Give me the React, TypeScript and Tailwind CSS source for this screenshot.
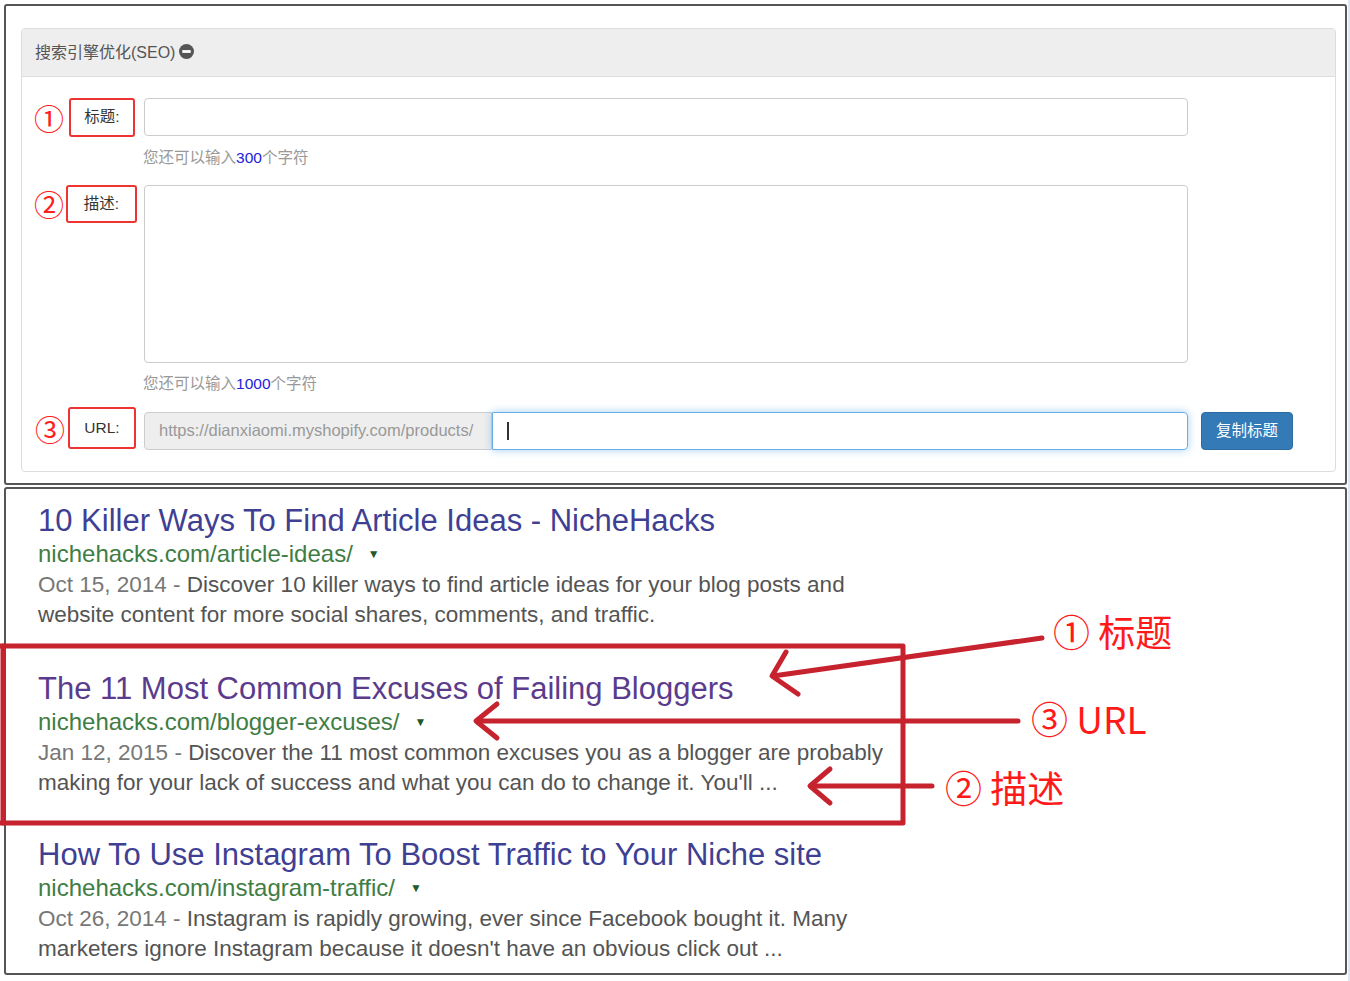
import React from "react";

const cjk = { fontFamily: '"Liberation Sans", "Noto Sans CJK SC", sans-serif' };
const serp = { fontFamily: '"Liberation Sans", Arial, sans-serif' };

const results = [
  {
    title: "10 Killer Ways To Find Article Ideas - NicheHacks",
    titleColor: "text-[#3f3f93]",
    url: "nichehacks.com/article-ideas/",
    date: "Oct 15, 2014",
    lines: [
      "Discover 10 killer ways to find article ideas for your blog posts and",
      "website content for more social shares, comments, and traffic.",
    ],
  },
  {
    title: "The 11 Most Common Excuses of Failing Bloggers",
    titleColor: "text-[#5b3c8c]",
    url: "nichehacks.com/blogger-excuses/",
    date: "Jan 12, 2015",
    lines: [
      "Discover the 11 most common excuses you as a blogger are probably",
      "making for your lack of success and what you can do to change it. You'll ...",
    ],
  },
  {
    title: "How To Use Instagram To Boost Traffic to Your Niche site",
    titleColor: "text-[#3f3f93]",
    url: "nichehacks.com/instagram-traffic/",
    date: "Oct 26, 2014",
    lines: [
      "Instagram is rapidly growing, ever since Facebook bought it. Many",
      "marketers ignore Instagram because it doesn't have an obvious click out ...",
    ],
  },
];

function Num({ n }: { n: string }) {
  return (
    <span className="text-[30px] leading-none text-[#ff2020]" style={cjk}>
      {n}
    </span>
  );
}

function LabelBox({ text, w, h }: { text: string; w: string; h: string }) {
  return (
    <div
      className={`${w} ${h} flex items-center justify-center border-2 border-[#ee3333] rounded-[3px] text-[15.5px] text-[#333]`}
    >
      {text}
    </div>
  );
}

function MinusCircle() {
  return (
    <svg width="15" height="15" viewBox="0 0 16 16" className="inline-block ml-[4px] -mt-[3px]">
      <circle cx="8" cy="8" r="8" fill="#555" />
      <rect x="3.5" y="6.5" width="9" height="3" fill="#fff" />
    </svg>
  );
}

function SeoForm() {
  return (
    <div className="ml-[4px] mt-[4px] w-[1343px] h-[481px] border-2 border-[#555] rounded-[3px] pt-[22px] pl-[15px]" style={cjk}>
      <div className="w-[1315px] h-[444px] border border-[#ddd] rounded-[4px] overflow-hidden bg-white">
        <div className="h-[48px] bg-[#eeeeee] border-b border-[#ddd] flex items-center pl-[13px] text-[16px] text-[#555]">
          搜索引擎优化(SEO)
          <MinusCircle />
        </div>
        <div className="pt-[21px]">
          <div className="flex items-center h-[38px]">
            <div className="w-[47px] pl-[12px] pt-[8px]">
              <Num n="①" />
            </div>
            <LabelBox text="标题:" w="w-[66px]" h="h-[39px]" />
            <div className="ml-[9px] w-[1044px] h-[38px] border border-[#ccc] rounded-[4px]" />
          </div>
          <div className="ml-[121px] mt-[12px] h-[20px] text-[15.5px] leading-[20px] text-[#999]">
            您还可以输入<span className="text-[#2222dd]">300</span>个字符
          </div>
          <div className="flex items-start mt-[17px]">
            <div className="w-[44px] pl-[12px] pt-[6px]">
              <Num n="②" />
            </div>
            <LabelBox text="描述:" w="w-[71px]" h="h-[38px]" />
            <div className="ml-[7px] w-[1044px] h-[178px] border border-[#ccc] rounded-[4px]" />
          </div>
          <div className="ml-[121px] mt-[11px] h-[20px] text-[15.5px] leading-[20px] text-[#999]">
            您还可以输入<span className="text-[#2222dd]">1000</span>个字符
          </div>
          <div className="flex items-center mt-[13px] h-[42px]">
            <div className="w-[46px] pl-[13px] pt-[8px]">
              <Num n="③" />
            </div>
            <LabelBox text="URL:" w="w-[68px]" h="h-[42px]" />
            <div className="ml-[8px] flex h-[38px] mt-[5px]">
              <div className="w-[348px] h-[38px] bg-[#eeeeee] border border-[#ccc] rounded-l-[4px] flex items-center pl-[14px] text-[16.5px] text-[#999]">
                https://dianxiaomi.myshopify.com/products/
              </div>
              <div className="w-[696px] h-[38px] border border-[#66afe9] rounded-r-[4px] shadow-[0_0_8px_rgba(102,175,233,0.6)] flex items-center pl-[14px]">
                <span className="w-[2px] h-[18px] bg-[#333]" />
              </div>
            </div>
            <div className="ml-[13px] mt-[5px] w-[92px] h-[38px] rounded-[4px] bg-[#337ab7] border border-[#2e6da4] flex items-center justify-center text-[15.5px] text-white">
              复制标题
            </div>
          </div>
        </div>
      </div>
    </div>
  );
}

function SerpShot() {
  return (
    <div className="ml-[4px] mt-[2px] w-[1343px] h-[488px] border-2 border-[#555] rounded-[3px] pt-[15px] pl-[32px] bg-white" style={serp}>
      {results.map((r, i) => (
        <div key={r.url} className={i === 1 ? "mt-[42px]" : i === 2 ? "mt-[40px]" : ""}>
          <div className={`h-[34px] leading-[34px] text-[31px] ${r.titleColor}`}>{r.title}</div>
          <div className="h-[32px] leading-[32px] text-[24px] text-[#3f7d45] flex items-center">
            {r.url}
            <span className="ml-[15px] text-[12px] text-[#1f5a28]">▼</span>
          </div>
          {r.lines.map((l, j) => (
            <div key={j} className="h-[30px] leading-[30px] text-[22.5px] text-[#545454]">
              {j === 0 ? <span className="text-[#777]">{r.date} - </span> : null}
              {l}
            </div>
          ))}
        </div>
      ))}
    </div>
  );
}

function Annotations() {
  const red = "#c6232f";
  return (
    <svg className="absolute left-0 top-0 pointer-events-none" width="1350" height="981" viewBox="0 0 1350 981">
      <g stroke={red} strokeWidth="5" fill="none" strokeLinecap="round" strokeLinejoin="round">
        <polyline points="0,646 903,646 903,823 0,823" strokeLinecap="butt" />
        <line x1="3" y1="646" x2="3" y2="823" />
        <line x1="1042" y1="638" x2="773" y2="676" />
        <polyline points="786,652 772,676 798,694" />
        <line x1="1018" y1="721" x2="478" y2="721" />
        <polyline points="497,704 476,721 497,738" />
        <line x1="932" y1="786" x2="812" y2="786" />
        <polyline points="830,769 810,786 830,803" />
      </g>
      <g fill="#ff1a1a" fontSize="37" fontFamily='"Noto Sans CJK SC", sans-serif'>
        <text x="1053" y="647">① 标题</text>
        <text x="1031" y="734">③ URL</text>
        <text x="945" y="803">② 描述</text>
      </g>
    </svg>
  );
}

export default function App() {
  return (
    <div className="relative w-[1350px] h-[981px] bg-white overflow-hidden">
      <SeoForm />
      <SerpShot />
      <Annotations />
      <div className="absolute right-0 top-0 w-[2px] h-[981px] bg-[#dbe8f5]" />
    </div>
  );
}
